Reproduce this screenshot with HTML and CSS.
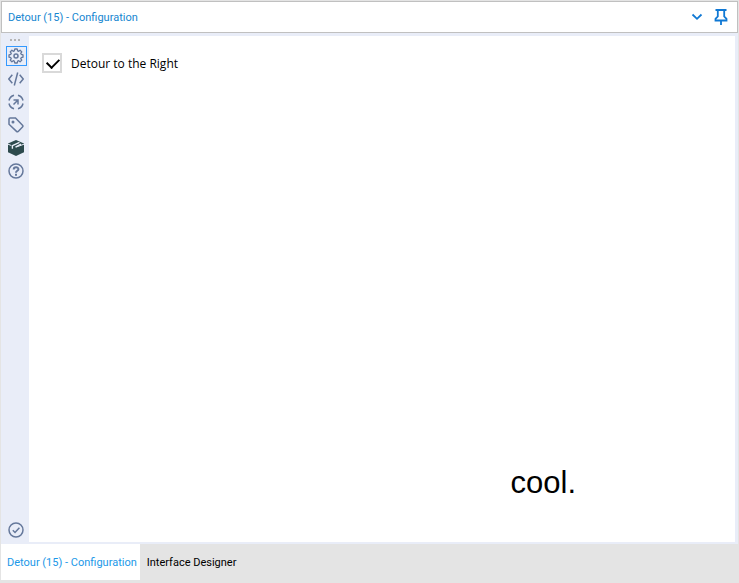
FILE: index.html
```html
<!DOCTYPE html>
<html lang="en">
<head>
  <meta charset="UTF-8">
  <meta name="viewport" content="width=device-width, initial-scale=1.0">
  <title>Detour (15) - Configuration</title>
  <link rel="stylesheet" href="styles.css">
</head>
<body>
  <header class="titlebar">
    <h1 class="title">Detour (15) - Configuration</h1>
    <button class="title-btn" aria-label="Window options">
      <svg width="16" height="16" viewBox="0 0 16 16"><path d="M3.500 5.500L8 9.800l4.500-4.300"/></svg>
    </button>
    <button class="title-btn" aria-label="Pin">
      <svg width="16" height="18" viewBox="0 0 16 18"><path d="M2.500 2h11M4.800 2v6.500L2.500 10.800v1.700h11v-1.700L11.200 8.500V2M8 12.500V17"/></svg>
    </button>
  </header>
  <div class="panel">
    <nav class="toolbar">
      <div class="grip"><i></i><i></i><i></i></div>
      <button class="tool selected" aria-label="Configuration">
        <svg width="16" height="16" viewBox="-8 -8 16 16"><path stroke-linejoin="round" stroke-width="1.300" d="M7-1.200V1.200L5.200 1.700 4.700 2.700 5.800 4.100 4.100 5.800 2.700 4.700 1.700 5.200 1.200 7H-1.200L-1.700 5.200-2.700 4.700-4.100 5.800-5.800 4.100-4.700 2.700-5.200 1.700-7 1.200V-1.200L-5.200-1.700-4.700-2.700-5.800-4.100-4.100-5.800-2.700-4.700-1.700-5.200-1.200-7H1.200L1.700-5.200 2.700-4.700 4.100-5.800 5.800-4.100 4.700-2.700 5.200-1.700z"/><circle r="2"/></svg>
      </button>
      <button class="tool" aria-label="XML view">
        <svg width="16" height="16" viewBox="0 0 16 16"><path d="M4.300 3.800L.8 8l3.500 4.200M11.700 3.800L15.200 8l-3.500 4.200M9.700 1.500l-3.400 13"/></svg>
      </button>
      <button class="tool" aria-label="Navigation">
        <svg width="16" height="16" viewBox="0 0 16 16"><path d="M1 6.500A7.100 7.100 0 0 1 6 1.200M10 1.200a7.100 7.100 0 0 1 5 5.300M15 9.500a7.100 7.100 0 0 1-5 5.300M6 14.800a7.100 7.100 0 0 1-5-5.300M5.500 10.500l4.500-4.500M5.500 6h4.500v4.500"/></svg>
      </button>
      <button class="tool" aria-label="Annotation">
        <svg width="16" height="16" viewBox="0 0 16 16"><path d="M1 2.200Q1 1 2.200 1h5.300l7 7.200q.9.900 0 1.800l-4.300 4.400q-.9.800-1.700 0L1 7.300z"/><circle class="solid" cx="5" cy="5" r="1.500"/></svg>
      </button>
      <button class="tool" aria-label="Package">
        <svg width="16" height="16" viewBox="0 0 16 16"><path class="box" d="M8 0l8 3.500v8.700L8 16l-8-3.800V3.500z"/><path class="tape" d="M0 4.200l3.300 1.300M7.800 7.200L16 4.200"/><path class="tape wide" d="M4.400 8.800V5.700L11.500 2.300M7.500 7L13 4.200"/></svg>
      </button>
      <button class="tool" aria-label="Help">
        <svg width="16" height="16" viewBox="0 0 16 16"><circle cx="8" cy="8" r="7"/><path d="M5.700 6.500C5.800 3.500 10.400 3.700 10.400 6.200 10.400 7.800 8 7.700 8 9.700M8 10.800v1.900" stroke-width="2"/></svg>
      </button>
      <button class="tool status" aria-label="Status">
        <svg width="16" height="16" viewBox="0 0 16 16"><circle cx="8" cy="8" r="7"/><path d="M4.800 8.300l2.200 2.200 4.400-4.800"/></svg>
      </button>
    </nav>
    <main class="content">
      <label class="option"><input type="checkbox" checked>Detour to the Right</label>
      <p class="note">cool.</p>
    </main>
  </div>
  <footer class="tabs">
    <button class="tab active">Detour (15) - Configuration</button>
    <button class="tab">Interface Designer</button>
  </footer>
</body>
</html>
```

FILE: styles.css
```css
* { box-sizing: border-box; }
body { margin: 0; padding: 1px 1px 0; height: 100vh; display: flex; flex-direction: column; background: #e4e4e4; font-family: Roboto, "Liberation Sans", sans-serif; font-size: 11px; color: #000; }
button { margin: 0; padding: 0; border: 0; background: none; font: inherit; color: inherit; }
svg { display: block; fill: none; stroke: currentColor; stroke-width: 1.5; }

.titlebar { display: flex; align-items: center; gap: 8px; height: 32px; padding: 0 8px 0 6px; border: 1px solid #c0c0c0; background: #fff; color: #0f78d4; }
.title { flex: 1; margin: 0; font-size: 11px; font-weight: 400; color: #1686d0; }
.title-btn svg { stroke-width: 1.8; }

.panel { flex: 1; display: flex; padding: 3px 3px 2px 0; background: #e9edf8; }
.toolbar { display: flex; flex-direction: column; align-items: center; gap: 3px; width: 28px; padding: 3px 0 2px 2px; color: #65789b; }
.grip { display: flex; gap: 2px; width: 12px; height: 4px; }
.grip i { width: 2px; height: 2px; background: #b5b5b5; }
.tool { display: flex; align-items: center; justify-content: center; width: 21px; height: 20px; border: 1px solid transparent; }
.tool.selected { border-color: #3399ff; }
.tool.status { margin-top: auto; }
.tool .solid { fill: currentColor; stroke: none; }
.tool .box { fill: #2d4a4d; stroke: none; }
.tool .tape { stroke: #e9edf8; stroke-width: 1; }
.tool .wide { stroke-width: 1.4; }

.content { flex: 1; display: flex; flex-direction: column; justify-content: space-between; padding: 17px 159px 41px 13px; background: #fff; }
.option { display: flex; align-items: center; gap: 9px; font: 12px "Open Sans", sans-serif; }
.option input { appearance: none; width: 20px; height: 20px; margin: 0; border: 2px solid #d9d9d9; background: #fff; }
.option input:checked::before { content: ""; display: block; width: 10px; height: 6px; margin: 3px; border: solid #000; border-width: 0 0 2px 2px; transform: rotate(-45deg); }
.note { align-self: flex-end; margin: 0; font: 31px/36px "Liberation Sans", sans-serif; }

.tabs { display: flex; gap: 1px; height: 39px; padding-bottom: 3px; }
.tab { padding: 0 3px 0 6px; }
.tab.active { background: #fff; color: #1b98e8; }
```
